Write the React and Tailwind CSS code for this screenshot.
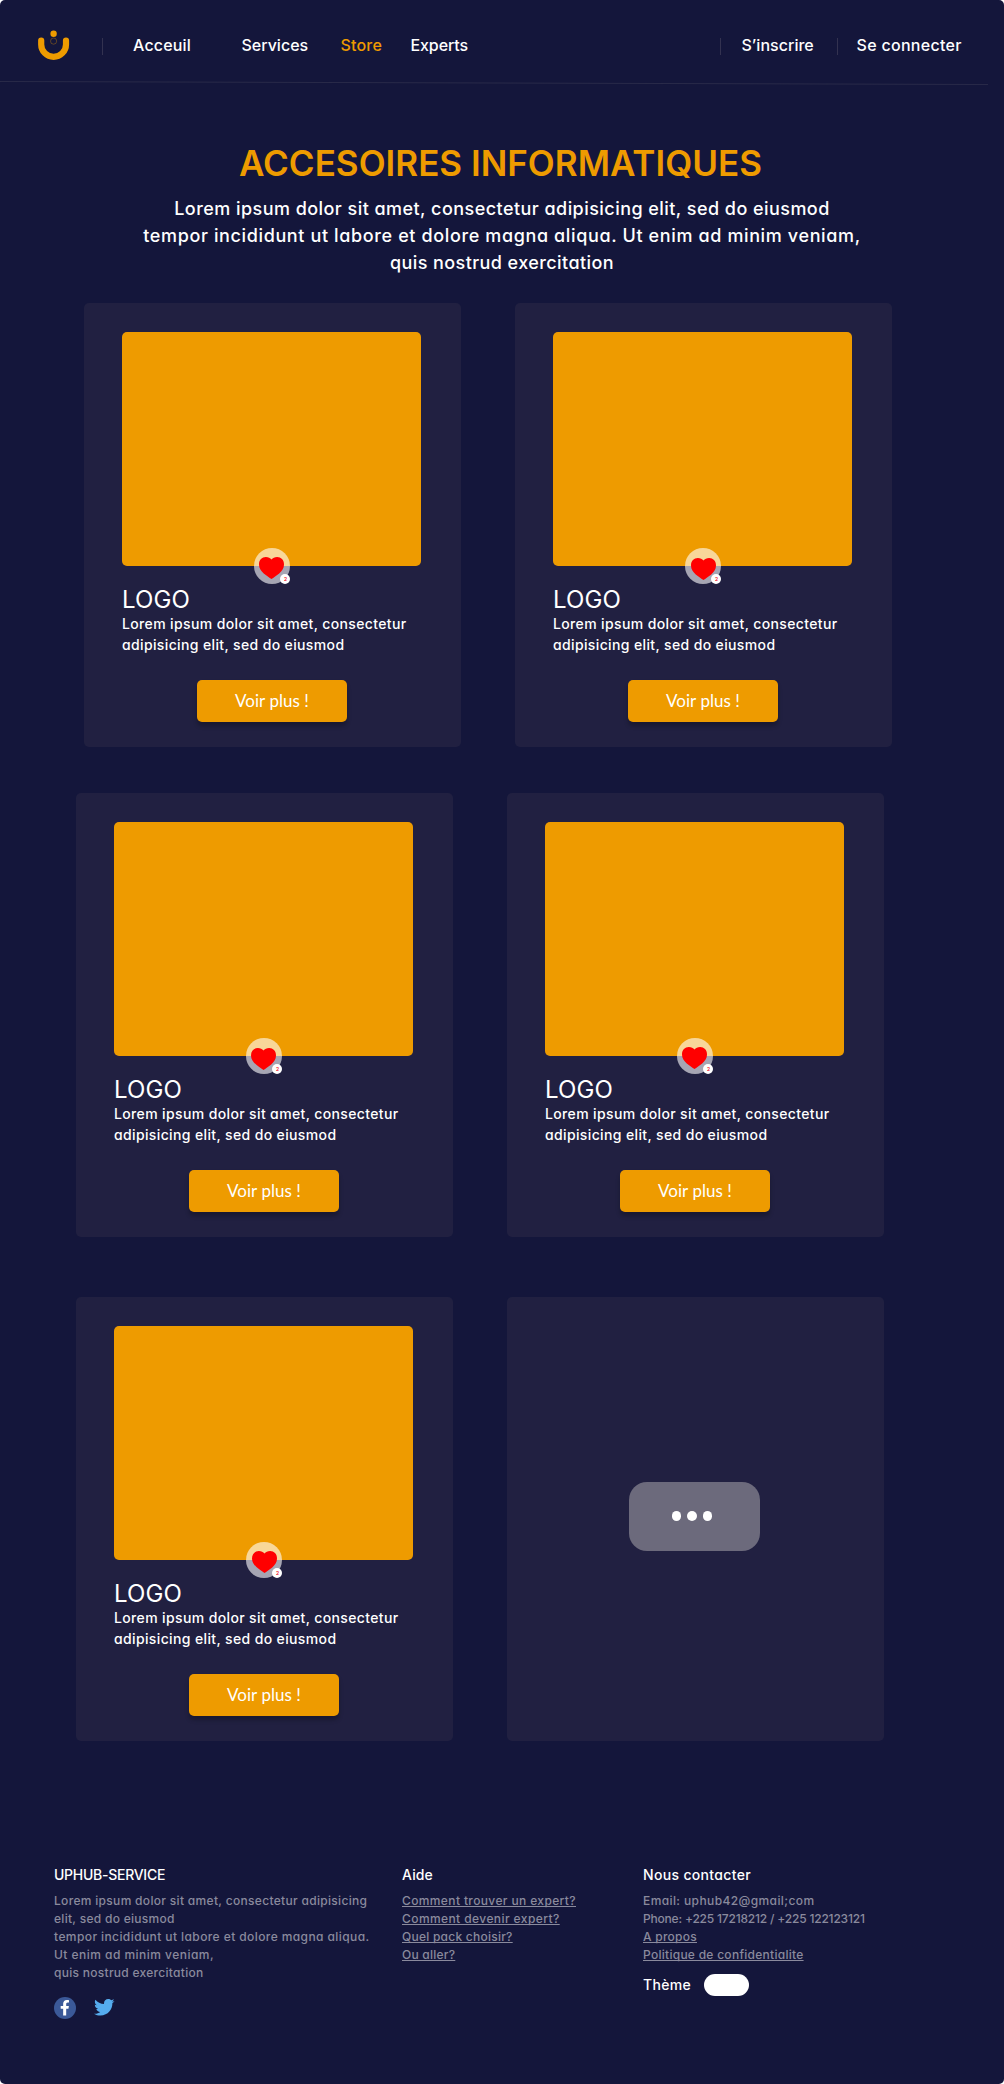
import React from "react";
import { FaFacebookF, FaTwitter } from "react-icons/fa";

function Logo() {
  return (
    <svg className="mt-[29px] ml-[37px] h-8 w-[33px] shrink-0" viewBox="0 0 33 32" fill="none">
      <circle cx="16.6" cy="4.7" r="3.2" fill="#ee9b00" />
      <circle cx="16.6" cy="12.1" r="3.1" stroke="#ee9b00" strokeOpacity="0.55" strokeWidth="0.6" />
      <path d="M4.2 11.6V15.4A12.4 12.4 0 0 0 29 15.4V11.6" stroke="#ee9b00" strokeWidth="6.2" strokeLinecap="round" />
    </svg>
  );
}

function Divider({ className }) {
  return <span className={"mt-[38px] h-[17px] w-px shrink-0 bg-[#333250] " + className} />;
}

function Header() {
  return (
    <header>
      <div className="flex h-20 items-start text-base font-medium whitespace-nowrap">
        <Logo />
        <Divider className="ml-8" />
        <nav className="mt-[33px] ml-[30px] flex">
          <a className="w-[108.5px] tracking-[0.17px]">Acceuil</a>
          <a className="w-[99px]">Services</a>
          <a className="w-[70px] tracking-[0.18px] text-[#ee9b00]">Store</a>
          <a className="w-[60.5px] tracking-[-0.1px]">Experts</a>
        </nav>
        <Divider className="ml-[249px]" />
        <a className="mt-[33px] ml-[20.5px] w-[74px] tracking-[0.03px]">S’inscrire</a>
        <Divider className="ml-[21.5px]" />
        <a className="mt-[33px] ml-[18.5px] tracking-[0.3px]">Se connecter</a>
      </div>
      <svg className="block h-[6px] w-[988px]" viewBox="0 0 988 6">
        <line x1="0" y1="1.5" x2="988" y2="4.5" stroke="#292a49" strokeWidth="1" />
      </svg>
    </header>
  );
}

function LikeBadge({ heart }) {
  return (
    <div className="absolute -bottom-[18px] left-[132px] h-9 w-9">
      <div className="h-9 w-9 rounded-full bg-white/60">
        <svg className={"absolute h-[22px] w-[25px] " + heart} viewBox="0 0 25 22">
          <path
            d="M12.5 22C8.5 19 0 14.8 0 7.4C0 3 3 .1 6.9 .1C9.3 .1 11.3 1 12.5 2.6C13.7 1 15.7 .1 18.1 .1C22 .1 25 3 25 7.4C25 14.8 16.5 19 12.5 22Z"
            fill="#ff0000"
          />
        </svg>
      </div>
      <span className="absolute right-0 bottom-0 flex h-[10px] w-[10px] items-center justify-center rounded-full bg-white pl-px text-[5px] leading-none font-semibold text-[#f01028]">
        2
      </span>
    </div>
  );
}

function Card({ heart }) {
  return (
    <article className="h-[444px] w-[376.5px] rounded-[5px] bg-[#212041] px-[38px] pt-[29px]">
      <div className="relative h-[234px] w-[299px] rounded-[5px] bg-[#ee9b00]">
        <LikeBadge heart={heart} />
      </div>
      <h2 className="mt-5 text-2xl leading-7 font-normal tracking-[0.1px]">LOGO</h2>
      <p className="-mt-px text-sm leading-[21px] font-medium tracking-[0.368px] whitespace-nowrap">
        Lorem ipsum dolor sit amet, consectetur
        <br />
        adipisicing elit, sed do eiusmod
      </p>
      <button className="mt-[25px] ml-[75px] block h-[42px] w-[150px] rounded-[5px] bg-[#ee9b00] font-[Lato] text-[17px] tracking-[0.05px] shadow-[0_4px_4px_rgba(0,0,0,0.25)]">
        Voir plus !
      </button>
    </article>
  );
}

function MoreCard() {
  return (
    <article className="h-[444px] w-[376.5px] rounded-[5px] bg-[#212041] pt-[185px] pl-[122px]">
      <button className="flex h-[69px] w-[131px] items-start justify-center gap-[5.9px] rounded-[18px] bg-[#6c6a7c] pt-[29px] pr-[5px]">
        <span className="h-[9.6px] w-[9.6px] rounded-full bg-white" />
        <span className="h-[9.6px] w-[9.6px] rounded-full bg-white" />
        <span className="h-[9.6px] w-[9.6px] rounded-full bg-white" />
      </button>
    </article>
  );
}

function Footer() {
  const text = "text-xs leading-[18px] mt-[7px] text-[#8a8a9d] whitespace-nowrap";
  const link = "underline decoration-1 underline-offset-1 [text-decoration-skip-ink:none]";
  return (
    <footer className="mt-[123px] flex pl-[54px] font-medium">
      <section className="w-[348px]">
        <h3 className="text-sm leading-[21px] tracking-[-0.27px]">UPHUB-SERVICE</h3>
        <div className={text}>
          <p className="tracking-[0.316px]">Lorem ipsum dolor sit amet, consectetur adipisicing</p>
          <p className="tracking-[0.292px]">elit, sed do eiusmod</p>
          <p className="tracking-[0.409px]">tempor incididunt ut labore et dolore magna aliqua.</p>
          <p className="tracking-[0.466px]">Ut enim ad minim veniam,</p>
          <p className="tracking-[0.284px]">quis nostrud exercitation</p>
        </div>
        <div className="mt-[15px] flex gap-[18px]">
          <span className="flex h-[22px] w-[22px] items-center justify-center rounded-full bg-[#3b5998]">
            <FaFacebookF className="h-[15.5px] w-[9.7px] text-white" />
          </span>
          <FaTwitter className="h-[20.5px] w-[20.5px] text-[#55acee]" />
        </div>
      </section>
      <section className="w-[241px]">
        <h3 className="text-sm leading-[21px] tracking-[0.15px]">Aide</h3>
        <div className={text}>
          <p><a className={link + " tracking-[0.374px]"}>Comment trouver un expert?</a></p>
          <p><a className={link + " tracking-[0.415px]"}>Comment devenir expert?</a></p>
          <p><a className={link + " tracking-[0.246px]"}>Quel pack choisir?</a></p>
          <p><a className={link + " tracking-[0.243px]"}>Ou aller?</a></p>
        </div>
      </section>
      <section>
        <h3 className="text-sm leading-[21px] tracking-[0.334px]">Nous contacter</h3>
        <div className={text}>
          <p className="tracking-[0.398px]">Email: uphub42@gmail;com</p>
          <p className="tracking-[-0.191px]">Phone: +225 17218212 / +225 122123121</p>
          <p><a className={link + " tracking-[0.26px]"}>A propos</a></p>
          <p><a className={link + " tracking-[0.276px]"}>Politique de confidentialite</a></p>
        </div>
        <div className="mt-[10px] flex">
          <span className="w-[61px] text-sm leading-[21px] tracking-[0.309px]">Thème</span>
          <span className="h-[22px] w-[45px] rounded-full bg-white" />
        </div>
      </section>
    </footer>
  );
}

export default function App() {
  return (
    <div className="bg-white">
      <div className="h-[2084px] w-[1004px] overflow-hidden rounded-[5px] bg-[#14163b] font-[Inter,sans-serif] text-white [font-feature-settings:'cv11']">
        <Header />
        <section className="mt-[50px] text-center whitespace-nowrap">
          <h1 className="pr-[3px] text-[35px] leading-[54px] font-semibold tracking-[0.02px] text-[#ee9b00]">
            ACCESOIRES INFORMATIQUES
          </h1>
          <div className="mt-[5px] text-lg leading-[27px] font-medium">
            <p className="tracking-[0.452px]">Lorem ipsum dolor sit amet, consectetur adipisicing elit, sed do eiusmod</p>
            <p className="tracking-[0.627px]">tempor incididunt ut labore et dolore magna aliqua. Ut enim ad minim veniam,</p>
            <p className="tracking-[0.416px]">quis nostrud exercitation</p>
          </div>
        </section>
        <main>
          <div className="mt-[27px] flex gap-[54.5px] pl-[84px]">
            <Card heart="left-[5px] top-[8.7px]" />
            <Card heart="left-[6px] top-[10px]" />
          </div>
          <div className="mt-[46px] flex gap-[54.5px] pl-[76px]">
            <Card heart="left-[5px] top-[9.7px]" />
            <Card heart="left-[5px] top-[9.3px]" />
          </div>
          <div className="mt-[60px] flex gap-[54.5px] pl-[76px]">
            <Card heart="left-[5.7px] top-[8.7px]" />
            <MoreCard />
          </div>
        </main>
        <Footer />
      </div>
    </div>
  );
}
